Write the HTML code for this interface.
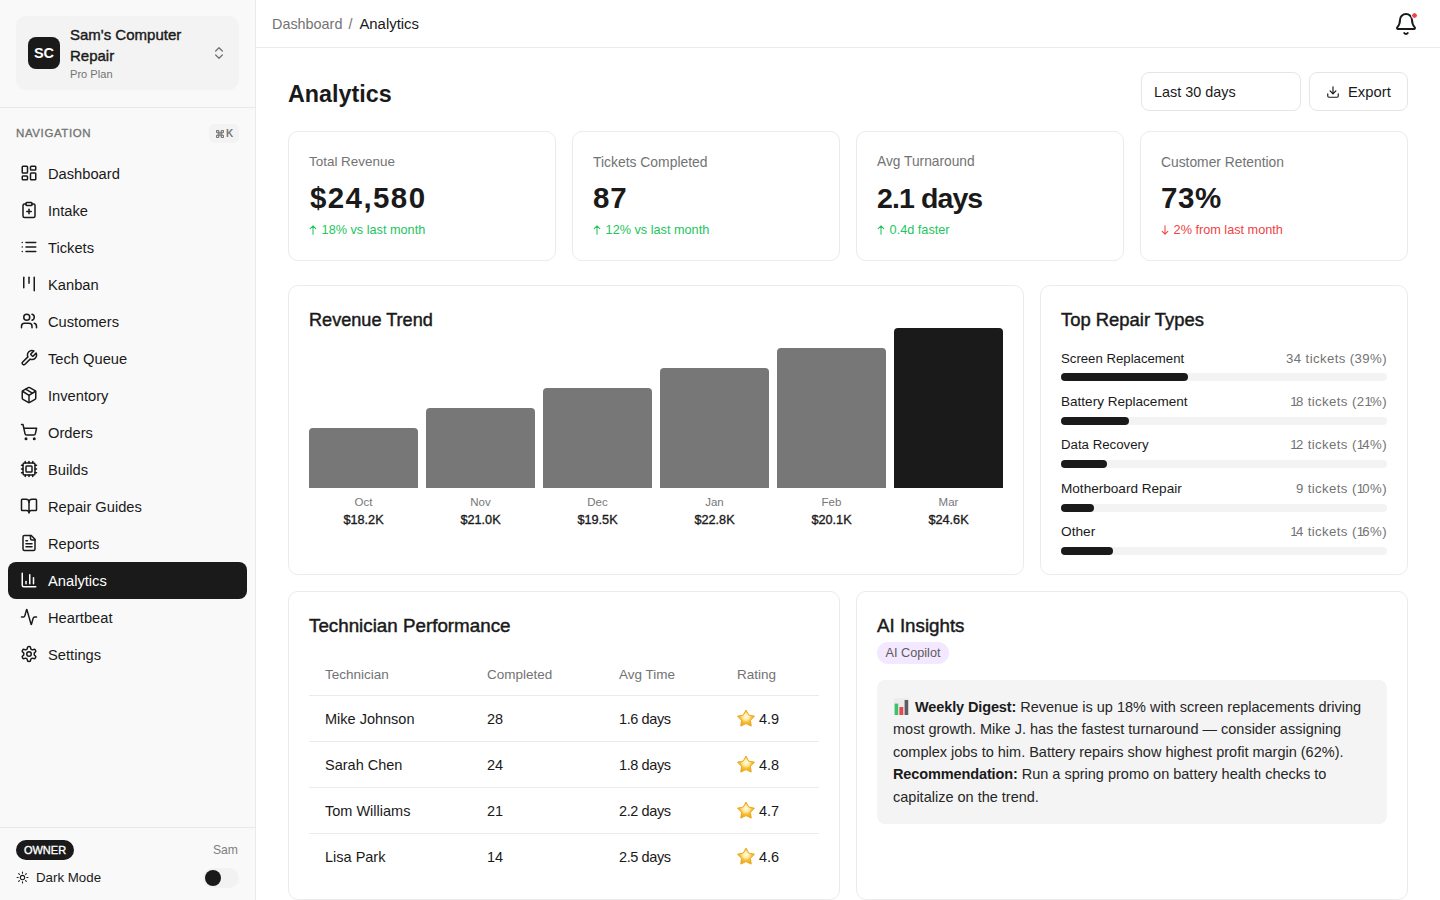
<!DOCTYPE html>
<html><head><meta charset="utf-8">
<style>
*{box-sizing:border-box;margin:0;padding:0}
html,body{width:1440px;height:900px;overflow:hidden;background:#fff}
body{font-family:"Liberation Sans",sans-serif;color:#1a1a1a;position:relative}
.abs{position:absolute}
.nw{white-space:nowrap}
svg.i{position:absolute;fill:none;stroke:currentColor;stroke-width:2;stroke-linecap:round;stroke-linejoin:round}
/* sidebar */
#sb{position:absolute;left:0;top:0;width:256px;height:900px;background:#f9f9f9;border-right:1px solid #eaeaea}
.org{position:absolute;left:16px;top:16px;width:223px;height:74px;background:#f3f3f3;border-radius:10px}
.av{position:absolute;left:12px;top:21px;width:32px;height:32px;border-radius:8px;background:#1a1a1a;color:#fff;font-weight:700;font-size:14.5px;line-height:32px;text-align:center}
.nav{position:absolute;left:8px;width:239px;height:37px;border-radius:8px;color:#1a1a1a}
.nav.act{background:#1a1a1a;color:#fff}
.nav svg{left:12px;top:9px;width:18px;height:18px}
.nav span{position:absolute;left:40px;top:1px;line-height:37px;font-size:14.7px;white-space:nowrap}
/* main */
#hd{position:absolute;left:256px;top:0;width:1184px;height:48px;border-bottom:1px solid #ebebeb;background:#fff}
.card{position:absolute;border:1px solid #ebebeb;border-radius:10px;background:#fff}
.kl{position:absolute;left:20px;font-size:13.3px;color:#737373;line-height:20px;white-space:nowrap}
.kv{position:absolute;left:20px;font-size:29.5px;font-weight:700;line-height:40px;white-space:nowrap;letter-spacing:0.9px}
.kc{position:absolute;left:20px;font-size:12.7px;line-height:18px;white-space:nowrap}
.up{color:#22c55e}.dn{color:#ef4444}
.ct{position:absolute;left:20px;font-size:18.4px;font-weight:400;-webkit-text-stroke:0.45px #1a1a1a;line-height:26px;white-space:nowrap}
.bar{position:absolute;width:109px;background:#777;border-radius:4px 4px 0 0}
.bl{position:absolute;width:109px;text-align:center;font-size:11.5px;color:#777;line-height:16px}
.bv{position:absolute;width:109px;text-align:center;font-size:12.7px;font-weight:400;-webkit-text-stroke:0.35px #1a1a1a;line-height:18px}
.rl{position:absolute;left:20px;font-size:13.2px;line-height:20px;white-space:nowrap}
.rr{position:absolute;right:20px;font-size:13.2px;line-height:20px;color:#737373;white-space:nowrap;letter-spacing:0.4px}
.trk{position:absolute;left:20px;width:326px;height:8px;border-radius:4px;background:#f3f3f3}
.trk div{height:8px;border-radius:4px;background:#1a1a1a}
.th{position:absolute;font-size:13.5px;color:#737373;line-height:20px;white-space:nowrap}
.td{position:absolute;font-size:14.5px;line-height:20px;white-space:nowrap}
.hr{position:absolute;left:20px;width:510px;height:1px;background:#ebebeb}
.ins{position:absolute;left:20px;top:88px;width:510px;height:144px;background:#f4f4f4;border-radius:8px}
.ins div{position:absolute;left:16px;font-size:14.5px;line-height:22.4px;white-space:nowrap;color:#262626}
.ins b{font-weight:700;color:#1a1a1a;letter-spacing:-0.12px}
.star{display:inline-block;width:18px;height:18px;vertical-align:-3px;margin-right:4px}
.em{display:inline-block;width:22px;height:17px;vertical-align:-3px;position:relative}
.arr{display:inline-block;width:8px;height:10px;margin-right:4.6px;vertical-align:-1px;fill:none;stroke:currentColor;stroke-width:1.05;stroke-linecap:round;stroke-linejoin:round}
.n1{font-style:normal;letter-spacing:-1.7px}
</style></head><body>
<svg width="0" height="0" style="position:absolute"><defs>
<radialGradient id="sg" cx="0.5" cy="0.42" r="0.55"><stop offset="0" stop-color="#fffbe6"/><stop offset="0.35" stop-color="#fde9a6"/><stop offset="0.6" stop-color="#f8c23a"/><stop offset="1" stop-color="#efa814"/></radialGradient>
<symbol id="st" viewBox="0 0 18 18"><path d="M9.00 1.00 L11.76 6.10 L17.46 7.15 L13.47 11.35 L14.23 17.10 L9.00 14.60 L3.77 17.10 L4.53 11.35 L0.54 7.15 L6.24 6.10Z" fill="url(#sg)" stroke="#e7a414" stroke-width="0.9" stroke-linejoin="round"/></symbol>
</defs></svg>

<div id="sb">
  <div class="org">
    <div class="av">SC</div>
    <div class="abs nw" style="left:54px;top:8px;font-size:15px;font-weight:400;-webkit-text-stroke:0.4px #1a1a1a;line-height:21px">Sam's Computer<br>Repair</div>
    <div class="abs nw" style="left:54px;top:50px;font-size:11.1px;color:#737373;line-height:16px">Pro Plan</div>
    <svg class="i" viewBox="0 0 24 24" style="left:195px;top:29px;width:16px;height:16px;color:#737373"><path d="m7 15 5 5 5-5"/><path d="m7 9 5-5 5 5"/></svg>
  </div>
  <div class="abs" style="left:0;top:107px;width:255px;height:1px;background:#e8e8e8"></div>
  <div class="abs nw" style="left:16px;top:124px;font-size:11.5px;font-weight:400;-webkit-text-stroke:0.3px #737373;letter-spacing:0.6px;color:#737373;line-height:18px">NAVIGATION</div>
  <div class="abs" style="left:209px;top:124px;width:30px;height:19px;border-radius:5px;background:#f3f3f3;color:#777"><svg viewBox="2 2 20 20" style="position:absolute;left:6.8px;top:5.6px;width:8px;height:8px;fill:none;stroke:#777;stroke-width:3;stroke-linecap:round;stroke-linejoin:round"><path d="M15 6v12a3 3 0 1 0 3-3H6a3 3 0 1 0 3 3V6a3 3 0 1 0-3 3h12a3 3 0 1 0-3-3"/></svg><div class="abs nw" style="left:17px;top:0;font-size:10px;font-weight:700;line-height:19px">K</div></div>

  <div class="nav" style="top:155px"><svg class="i" viewBox="0 0 24 24"><rect width="7" height="9" x="3" y="3" rx="1"/><rect width="7" height="5" x="14" y="3" rx="1"/><rect width="7" height="9" x="14" y="12" rx="1"/><rect width="7" height="5" x="3" y="16" rx="1"/></svg><span>Dashboard</span></div>
  <div class="nav" style="top:192px"><svg class="i" viewBox="0 0 24 24"><rect width="8" height="4" x="8" y="2" rx="1"/><path d="M16 4h2a2 2 0 0 1 2 2v14a2 2 0 0 1-2 2H6a2 2 0 0 1-2-2V6a2 2 0 0 1 2-2h2"/><path d="M9 14h6"/><path d="M12 17v-6"/></svg><span>Intake</span></div>
  <div class="nav" style="top:229px"><svg class="i" viewBox="0 0 24 24"><path d="M3 12h.01"/><path d="M3 18h.01"/><path d="M3 6h.01"/><path d="M8 12h13"/><path d="M8 18h13"/><path d="M8 6h13"/></svg><span>Tickets</span></div>
  <div class="nav" style="top:266px"><svg class="i" viewBox="0 0 24 24"><path d="M5 3v14"/><path d="M12 3v8"/><path d="M19 3v18"/></svg><span>Kanban</span></div>
  <div class="nav" style="top:303px"><svg class="i" viewBox="0 0 24 24"><path d="M16 21v-2a4 4 0 0 0-4-4H6a4 4 0 0 0-4 4v2"/><circle cx="9" cy="7" r="4"/><path d="M22 21v-2a4 4 0 0 0-3-3.87"/><path d="M16 3.13a4 4 0 0 1 0 7.75"/></svg><span>Customers</span></div>
  <div class="nav" style="top:340px"><svg class="i" viewBox="0 0 24 24"><path d="M14.7 6.3a1 1 0 0 0 0 1.4l1.6 1.6a1 1 0 0 0 1.4 0l3.77-3.770a6 6 0 0 1-7.94 7.94l-6.91 6.91a2.12 2.12 0 0 1-3-3l6.910-6.91a6 6 0 0 1 7.94-7.94l-3.76 3.76z"/></svg><span>Tech Queue</span></div>
  <div class="nav" style="top:377px"><svg class="i" viewBox="0 0 24 24"><path d="M11 21.73a2 2 0 0 0 2 0l7-4A2 2 0 0 0 21 16V8a2 2 0 0 0-1-1.73l-7-4a2 2 0 0 0-2 0l-7 4A2 2 0 0 0 3 8v8a2 2 0 0 0 1 1.73z"/><path d="M12 22V12"/><path d="m3.3 7 7.703 4.734a2 2 0 0 0 1.994 0L20.7 7"/><path d="m7.5 4.27 9 5.15"/></svg><span>Inventory</span></div>
  <div class="nav" style="top:414px"><svg class="i" viewBox="0 0 24 24"><circle cx="8" cy="21" r="1"/><circle cx="19" cy="21" r="1"/><path d="M2.05 2.05h2l2.66 12.42a2 2 0 0 0 2 1.58h9.78a2 2 0 0 0 1.95-1.57l1.65-7.43H5.12"/></svg><span>Orders</span></div>
  <div class="nav" style="top:451px"><svg class="i" viewBox="0 0 24 24"><path d="M12 20v2"/><path d="M12 2v2"/><path d="M17 20v2"/><path d="M17 2v2"/><path d="M2 12h2"/><path d="M2 17h2"/><path d="M2 7h2"/><path d="M20 12h2"/><path d="M20 17h2"/><path d="M20 7h2"/><path d="M7 20v2"/><path d="M7 2v2"/><rect width="16" height="16" x="4" y="4" rx="2"/><rect width="8" height="8" x="8" y="8" rx="1"/></svg><span>Builds</span></div>
  <div class="nav" style="top:488px"><svg class="i" viewBox="0 0 24 24"><path d="M12 7v14"/><path d="M3 18a1 1 0 0 1-1-1V4a1 1 0 0 1 1-1h5a4 4 0 0 1 4 4 4 4 0 0 1 4-4h5a1 1 0 0 1 1 1v13a1 1 0 0 1-1 1h-6a3 3 0 0 0-3 3 3 3 0 0 0-3-3z"/></svg><span>Repair Guides</span></div>
  <div class="nav" style="top:525px"><svg class="i" viewBox="0 0 24 24"><path d="M15 2H6a2 2 0 0 0-2 2v16a2 2 0 0 0 2 2h12a2 2 0 0 0 2-2V7Z"/><path d="M14 2v4a2 2 0 0 0 2 2h4"/><path d="M10 9H8"/><path d="M16 13H8"/><path d="M16 17H8"/></svg><span>Reports</span></div>
  <div class="nav act" style="top:562px"><svg class="i" viewBox="0 0 24 24"><path d="M3 3v16a2 2 0 0 0 2 2h16"/><path d="M18 17V9"/><path d="M13 17V5"/><path d="M8 17v-3"/></svg><span>Analytics</span></div>
  <div class="nav" style="top:599px"><svg class="i" viewBox="0 0 24 24"><path d="M22 12h-2.48a2 2 0 0 0-1.930 1.46l-2.35 8.36a.25.25 0 0 1-.48 0L9.24 2.18a.25.25 0 0 0-.48 0l-2.35 8.36A2 2 0 0 1 4.49 12H2"/></svg><span>Heartbeat</span></div>
  <div class="nav" style="top:636px"><svg class="i" viewBox="0 0 24 24"><path d="M12.22 2h-.44a2 2 0 0 0-2 2v.18a2 2 0 0 1-1 1.73l-.43.25a2 2 0 0 1-2 0l-.15-.08a2 2 0 0 0-2.73.73l-.22.38a2 2 0 0 0 .73 2.73l.15.1a2 2 0 0 1 1 1.72v.51a2 2 0 0 1-1 1.74l-.15.09a2 2 0 0 0-.73 2.73l.22.38a2 2 0 0 0 2.73.73l.15-.08a2 2 0 0 1 2 0l.43.25a2 2 0 0 1 1 1.73V20a2 2 0 0 0 2 2h.44a2 2 0 0 0 2-2v-.18a2 2 0 0 1 1-1.73l.43-.25a2 2 0 0 1 2 0l.15.08a2 2 0 0 0 2.73-.73l.22-.39a2 2 0 0 0-.73-2.73l-.15-.08a2 2 0 0 1-1-1.74v-.5a2 2 0 0 1 1-1.74l.15-.09a2 2 0 0 0 .73-2.73l-.22-.38a2 2 0 0 0-2.73-.73l-.15.08a2 2 0 0 1-2 0l-.43-.25a2 2 0 0 1-1-1.73V4a2 2 0 0 0-2-2z"/><circle cx="12" cy="12" r="3"/></svg><span>Settings</span></div>

  <div class="abs" style="left:0;top:827px;width:255px;height:1px;background:#e8e8e8"></div>
  <div class="abs" style="left:16px;top:840px;width:58px;height:20px;border-radius:10px;background:#1a1a1a;color:#fff;font-size:11px;font-weight:400;-webkit-text-stroke:0.35px #fff;line-height:20px;text-align:center">OWNER</div>
  <div class="abs nw" style="right:17px;top:841px;font-size:12.2px;color:#808080;line-height:19px">Sam</div>
  <svg class="i" viewBox="0 0 24 24" style="left:16px;top:871px;width:13px;height:13px;color:#1a1a1a"><circle cx="12" cy="12" r="4"/><path d="M12 2v2"/><path d="M12 20v2"/><path d="m4.93 4.93 1.41 1.41"/><path d="m17.66 17.66 1.41 1.41"/><path d="M2 12h2"/><path d="M20 12h2"/><path d="m6.34 17.66-1.41 1.41"/><path d="m19.07 4.93-1.41 1.41"/></svg>
  <div class="abs nw" style="left:36px;top:868px;font-size:13.3px;line-height:19px">Dark Mode</div>
  <div class="abs" style="left:203px;top:868px;width:36px;height:20px;border-radius:10px;background:#f2f2f2"><div class="abs" style="left:2px;top:2px;width:16px;height:16px;border-radius:50%;background:#1a1a1a"></div></div>
</div>

<div id="hd">
  <div class="abs nw" style="left:16px;top:14px;font-size:14.4px;line-height:20px;color:#737373">Dashboard <span style="margin:0 3px 0 2px">/</span> <span style="color:#1a1a1a;font-size:14.9px">Analytics</span></div>
  <svg class="i" viewBox="0 0 24 24" style="left:1138px;top:12px;width:24px;height:24px;color:#1a1a1a;stroke-width:2"><path d="M10.268 21a2 2 0 0 0 3.464 0"/><path d="M3.262 15.326A1 1 0 0 0 4 17h16a1 1 0 0 0 .74-1.673C19.41 13.956 18 12.499 18 8A6 6 0 0 0 6 8c0 4.499-1.411 5.956-2.738 7.326"/></svg>
  <div class="abs" style="left:1154.5px;top:12.4px;width:7px;height:7px;border-radius:50%;background:#ef4444;border:1.5px solid #fff;background-clip:padding-box"></div>
</div>

<!-- main -->
<div class="abs nw" style="left:288px;top:78.5px;font-size:23.3px;font-weight:700;line-height:30px">Analytics</div>
<div class="abs" style="left:1141px;top:72px;width:160px;height:39px;border:1px solid #e5e5e5;border-radius:8px"><div class="abs nw" style="left:12px;top:9px;font-size:14.4px;line-height:20px">Last 30 days</div></div>
<div class="abs" style="left:1309px;top:72px;width:99px;height:39px;border:1px solid #e5e5e5;border-radius:8px">
  <svg class="i" viewBox="0 0 24 24" style="left:16px;top:11.7px;width:14px;height:14px"><path d="M21 15v4a2 2 0 0 1-2 2H5a2 2 0 0 1-2-2v-4"/><path d="m7 10 5 5 5-5"/><path d="M12 15V3"/></svg>
  <div class="abs nw" style="left:38px;top:9px;font-size:14.8px;line-height:20px">Export</div>
</div>

<div class="card" style="left:288px;top:131px;width:268px;height:130px">
  <div class="kl" style="top:20px;font-size:13.45px">Total Revenue</div>
  <div class="kv" style="top:46px;left:21px;letter-spacing:1.4px">$24,580</div>
  <div class="kc up" style="top:89px"><svg class="arr" viewBox="0 0 8 10"><path d="M4 9.3V0.8M1.2 3.6 4 0.8 6.8 3.6"/></svg>18% vs last month</div>
</div>
<div class="card" style="left:572px;top:131px;width:268px;height:130px">
  <div class="kl" style="top:20px;font-size:13.9px">Tickets Completed</div>
  <div class="kv" style="top:46px">87</div>
  <div class="kc up" style="top:89px"><svg class="arr" viewBox="0 0 8 10"><path d="M4 9.3V0.8M1.2 3.6 4 0.8 6.8 3.6"/></svg>12% vs last month</div>
</div>
<div class="card" style="left:856px;top:131px;width:268px;height:130px">
  <div class="kl" style="top:20px;font-size:13.75px">Avg Turnaround</div>
  <div class="kv" style="top:46px;font-size:28.5px;letter-spacing:-0.9px">2.1 days</div>
  <div class="kc up" style="top:89px"><svg class="arr" viewBox="0 0 8 10"><path d="M4 9.3V0.8M1.2 3.6 4 0.8 6.8 3.6"/></svg>0.4d faster</div>
</div>
<div class="card" style="left:1140px;top:131px;width:268px;height:130px">
  <div class="kl" style="top:20px;font-size:13.83px">Customer Retention</div>
  <div class="kv" style="top:46px;letter-spacing:0.6px">73%</div>
  <div class="kc dn" style="top:89px"><svg class="arr" viewBox="0 0 8 10"><path d="M4 0.7V9.2M1.2 6.4 4 9.2 6.8 6.4"/></svg>2% from last month</div>
</div>

<!-- revenue trend -->
<div class="card" style="left:288px;top:285px;width:736px;height:290px">
  <div class="ct" style="top:21px;font-size:18.13px">Revenue Trend</div>
  <div class="bar" style="left:20px;top:142px;height:60px"></div>
  <div class="bar" style="left:137px;top:122px;height:80px"></div>
  <div class="bar" style="left:254px;top:102px;height:100px"></div>
  <div class="bar" style="left:371px;top:82px;height:120px"></div>
  <div class="bar" style="left:488px;top:62px;height:140px"></div>
  <div class="bar" style="left:605px;top:42px;height:160px;background:#1a1a1a"></div>
  <div class="bl" style="left:20px;top:208px">Oct</div><div class="bv" style="left:20px;top:225px">$18.2K</div>
  <div class="bl" style="left:137px;top:208px">Nov</div><div class="bv" style="left:137px;top:225px">$21.0K</div>
  <div class="bl" style="left:254px;top:208px">Dec</div><div class="bv" style="left:254px;top:225px">$19.5K</div>
  <div class="bl" style="left:371px;top:208px">Jan</div><div class="bv" style="left:371px;top:225px">$22.8K</div>
  <div class="bl" style="left:488px;top:208px">Feb</div><div class="bv" style="left:488px;top:225px">$20.1K</div>
  <div class="bl" style="left:605px;top:208px">Mar</div><div class="bv" style="left:605px;top:225px">$24.6K</div>
</div>

<!-- top repair types -->
<div class="card" style="left:1040px;top:285px;width:368px;height:290px">
  <div class="ct" style="top:21px;font-size:18.43px">Top Repair Types</div>
  <div class="rl" style="top:63px">Screen Replacement</div><div class="rr" style="top:63px">34 tickets (39%)</div>
  <div class="trk" style="top:87px"><div style="width:39%"></div></div>
  <div class="rl" style="top:106px;font-size:13.55px">Battery Replacement</div><div class="rr" style="top:106px"><i class="n1">1</i>8 tickets (2<i class="n1">1</i>%)</div>
  <div class="trk" style="top:130.5px"><div style="width:21%"></div></div>
  <div class="rl" style="top:149.3px;font-size:13.25px">Data Recovery</div><div class="rr" style="top:149.3px"><i class="n1">1</i>2 tickets (<i class="n1">1</i>4%)</div>
  <div class="trk" style="top:174px"><div style="width:14%"></div></div>
  <div class="rl" style="top:192.7px;font-size:13.58px">Motherboard Repair</div><div class="rr" style="top:192.7px">9 tickets (<i class="n1">1</i>0%)</div>
  <div class="trk" style="top:217.5px"><div style="width:10%"></div></div>
  <div class="rl" style="top:236px;font-size:13.7px">Other</div><div class="rr" style="top:236px"><i class="n1">1</i>4 tickets (<i class="n1">1</i>6%)</div>
  <div class="trk" style="top:261px"><div style="width:16%"></div></div>
</div>

<!-- technician performance -->
<div class="card" style="left:288px;top:591px;width:552px;height:309px">
  <div class="ct" style="top:21px;font-size:18.8px">Technician Performance</div>
  <div class="th" style="left:36px;top:73px">Technician</div>
  <div class="th" style="left:198px;top:73px">Completed</div>
  <div class="th" style="left:330px;top:73px">Avg Time</div>
  <div class="th" style="left:448px;top:73px">Rating</div>
  <div class="hr" style="top:103px"></div>
  <div class="td" style="left:36px;top:117px">Mike Johnson</div><div class="td" style="left:198px;top:117px">28</div><div class="td" style="left:330px;top:117px;letter-spacing:-0.4px">1.6 days</div><div class="td" style="left:448px;top:117px"><svg class="star" viewBox="0 0 18 18"><use href="#st"/></svg>4.9</div>
  <div class="hr" style="top:149px"></div>
  <div class="td" style="left:36px;top:163px">Sarah Chen</div><div class="td" style="left:198px;top:163px">24</div><div class="td" style="left:330px;top:163px;letter-spacing:-0.4px">1.8 days</div><div class="td" style="left:448px;top:163px"><svg class="star" viewBox="0 0 18 18"><use href="#st"/></svg>4.8</div>
  <div class="hr" style="top:195px"></div>
  <div class="td" style="left:36px;top:209px">Tom Williams</div><div class="td" style="left:198px;top:209px">21</div><div class="td" style="left:330px;top:209px;letter-spacing:-0.4px">2.2 days</div><div class="td" style="left:448px;top:209px"><svg class="star" viewBox="0 0 18 18"><use href="#st"/></svg>4.7</div>
  <div class="hr" style="top:241px"></div>
  <div class="td" style="left:36px;top:255px">Lisa Park</div><div class="td" style="left:198px;top:255px">14</div><div class="td" style="left:330px;top:255px;letter-spacing:-0.4px">2.5 days</div><div class="td" style="left:448px;top:255px"><svg class="star" viewBox="0 0 18 18"><use href="#st"/></svg>4.6</div>
</div>

<!-- AI insights -->
<div class="card" style="left:856px;top:591px;width:552px;height:309px">
  <div class="ct" style="top:21px;font-size:18.74px">AI Insights</div>
  <div class="abs nw" style="left:20px;top:50px;width:72px;height:22px;border-radius:11px;background:#f3e8ff;color:#5b5b5b;font-size:12.7px;line-height:22px;text-align:center">AI Copilot</div>
  <div class="ins">
    <div style="top:16px"><span class="em"><svg width="15" height="17.5" viewBox="0 0 15 17.5" style="position:absolute;left:1px;top:-0.5px"><rect x="0" y="0" width="15" height="17.5" rx="1.2" fill="#ececec"/><rect x="0.6" y="5.6" width="3.6" height="11.9" fill="#3cc26a"/><rect x="5.4" y="9" width="3.9" height="8.5" fill="#e8474b"/><rect x="10.6" y="2" width="3.6" height="15.5" fill="#5d5d66"/></svg></span><b>Weekly Digest:</b> Revenue is up 18% with screen replacements driving</div>
    <div style="top:38.4px">most growth. Mike J. has the fastest turnaround — consider assigning</div>
    <div style="top:60.8px">complex jobs to him. Battery repairs show highest profit margin (62%).</div>
    <div style="top:83.2px"><b>Recommendation:</b> Run a spring promo on battery health checks to</div>
    <div style="top:105.6px">capitalize on the trend.</div>
  </div>
</div>
</body></html>
